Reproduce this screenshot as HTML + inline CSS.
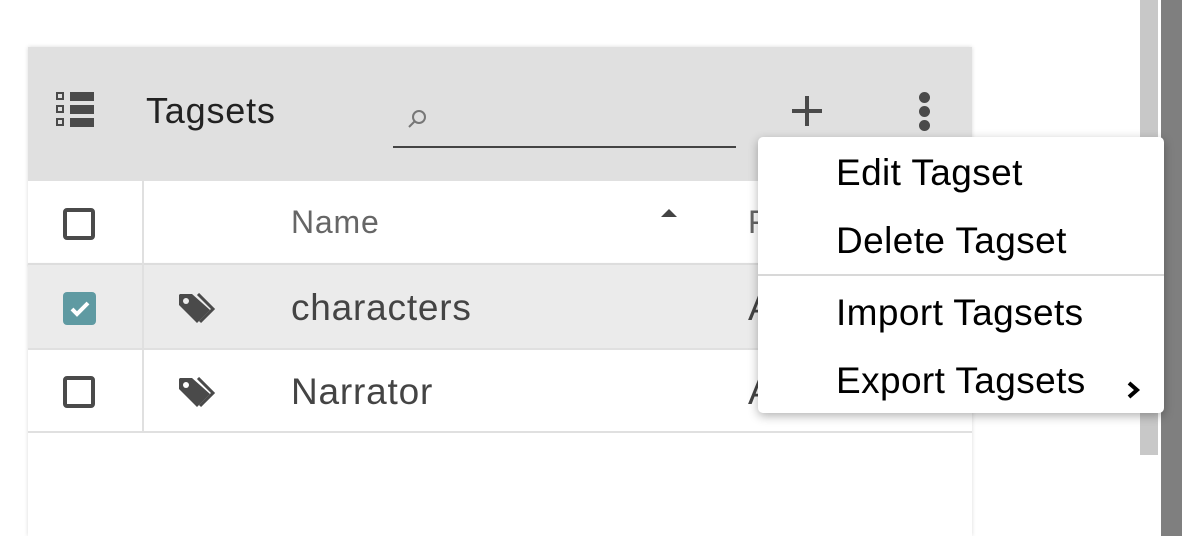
<!DOCTYPE html>
<html><head><style>
*{margin:0;padding:0;box-sizing:border-box}
body{width:1182px;height:536px;background:#fff;position:relative;overflow:hidden;font-family:"Liberation Sans","DejaVu Sans",sans-serif}
.a{position:absolute}
.panel{left:28px;top:47px;width:944px;height:489px;background:#fff;box-shadow:0 0 4px rgba(0,0,0,.15)}
.hdr{left:28px;top:47px;width:944px;height:134px;background:#e0e0e0}
.t{font-size:37px;color:#444;white-space:nowrap;letter-spacing:0.8px}
.cb{width:32px;height:32px;border:4px solid #4a4a4a;border-radius:4px}
.menu{left:758px;top:137px;width:406px;height:276px;background:#fff;border-radius:5px;box-shadow:0 3px 10px rgba(0,0,0,.3)}
.mi{position:absolute;left:78px;font-size:37px;color:#000;white-space:nowrap;letter-spacing:0.4px}
</style></head><body>
<div class="a" style="left:1140px;top:0;width:18px;height:455px;background:#c8c8c8"></div>
<div class="a" style="left:1161px;top:0;width:21px;height:536px;background:#7f7f7f"></div>
<div class="a panel"></div>
<div class="a hdr"></div>
<svg class="a" style="left:55px;top:91px" width="40" height="40" viewBox="0 0 40 40">
<g fill="none" stroke="#4a4a4a" stroke-width="2"><rect x="2" y="2" width="6" height="6"/><rect x="2" y="15" width="6" height="6"/><rect x="2" y="28" width="6" height="6"/></g>
<g fill="#4a4a4a"><rect x="15" y="1" width="24" height="9"/><rect x="15" y="14" width="24" height="9"/><rect x="15" y="27" width="24" height="9"/></g></svg>
<div class="a t" style="left:146px;top:90px;color:#222;font-size:36px">Tagsets</div>
<svg class="a" style="left:406px;top:107px" width="24" height="24" viewBox="0 0 24 24"><circle cx="13" cy="10" r="6" fill="none" stroke="#777" stroke-width="2"/><path d="M9 14l-6 6" stroke="#777" stroke-width="2"/></svg>
<div class="a" style="left:393px;top:146px;width:343px;height:2px;background:#444"></div>
<div class="a" style="left:792px;top:109px;width:30px;height:4px;background:#4a4a4a"></div>
<div class="a" style="left:805px;top:96px;width:4px;height:30px;background:#4a4a4a"></div>
<div class="a" style="left:919px;top:92px;width:11px;height:11px;border-radius:50%;background:#4a4a4a"></div>
<div class="a" style="left:919px;top:106px;width:11px;height:11px;border-radius:50%;background:#4a4a4a"></div>
<div class="a" style="left:919px;top:120px;width:11px;height:11px;border-radius:50%;background:#4a4a4a"></div>
<div class="a" style="left:28px;top:263px;width:944px;height:2px;background:#ddd;box-shadow:0 1px 2px rgba(0,0,0,.15)"></div>
<div class="a" style="left:28px;top:265px;width:944px;height:83px;background:#ebebeb"></div>
<div class="a" style="left:28px;top:348px;width:944px;height:2px;background:#e0e0e0"></div>
<div class="a" style="left:28px;top:431px;width:944px;height:2px;background:#e0e0e0"></div>
<div class="a" style="left:142px;top:181px;width:2px;height:251px;background:#e0e0e0"></div>
<div class="a cb" style="left:63px;top:208px"></div>
<div class="a" style="left:63px;top:292px;width:33px;height:33px;border-radius:4px;background:#5f9aa2"></div>
<svg class="a" style="left:68px;top:297px" width="24" height="24" viewBox="0 0 24 24"><path d="M4 12l5 5 11-11" fill="none" stroke="#fff" stroke-width="4"/></svg>
<div class="a cb" style="left:63px;top:376px"></div>
<svg class="a" style="left:178px;top:293px" width="40" height="32" viewBox="0 0 40 32"><path d="M1 2v10l18 18 13-13L14 1H2z" fill="#4a4a4a"/><circle cx="8" cy="8" r="3" fill="#ebebeb"/><path d="M20 1l15 15-13 13" fill="none" stroke="#4a4a4a" stroke-width="3"/></svg>
<svg class="a" style="left:178px;top:377px" width="40" height="32" viewBox="0 0 40 32"><path d="M1 2v10l18 18 13-13L14 1H2z" fill="#4a4a4a"/><circle cx="8" cy="8" r="3" fill="#fff"/><path d="M20 1l15 15-13 13" fill="none" stroke="#4a4a4a" stroke-width="3"/></svg>
<div class="a t" style="left:291px;top:204px;font-size:32px;color:#666">Name</div>
<svg class="a" style="left:661px;top:208px" width="16" height="10"><path d="M0 9L8 1 16 9z" fill="#444"/></svg>
<div class="a t" style="left:748px;top:204px;font-size:32px;color:#666">F</div>
<div class="a t" style="left:291px;top:287px">characters</div>
<div class="a t" style="left:748px;top:287px">A</div>
<div class="a t" style="left:291px;top:371px">Narrator</div>
<div class="a t" style="left:748px;top:371px">A</div>
<div class="a menu">
<div class="mi" style="top:15px">Edit Tagset</div>
<div class="mi" style="top:83px">Delete Tagset</div>
<div style="position:absolute;left:0;top:137px;width:406px;height:2px;background:#d8d8d8"></div>
<div class="mi" style="top:155px">Import Tagsets</div>
<div class="mi" style="top:223px">Export Tagsets</div>
<svg style="position:absolute;left:369px;top:244px" width="14" height="18"><path d="M2 2l8 7-8 7" fill="none" stroke="#000" stroke-width="4"/></svg>
</div>
</body></html>
